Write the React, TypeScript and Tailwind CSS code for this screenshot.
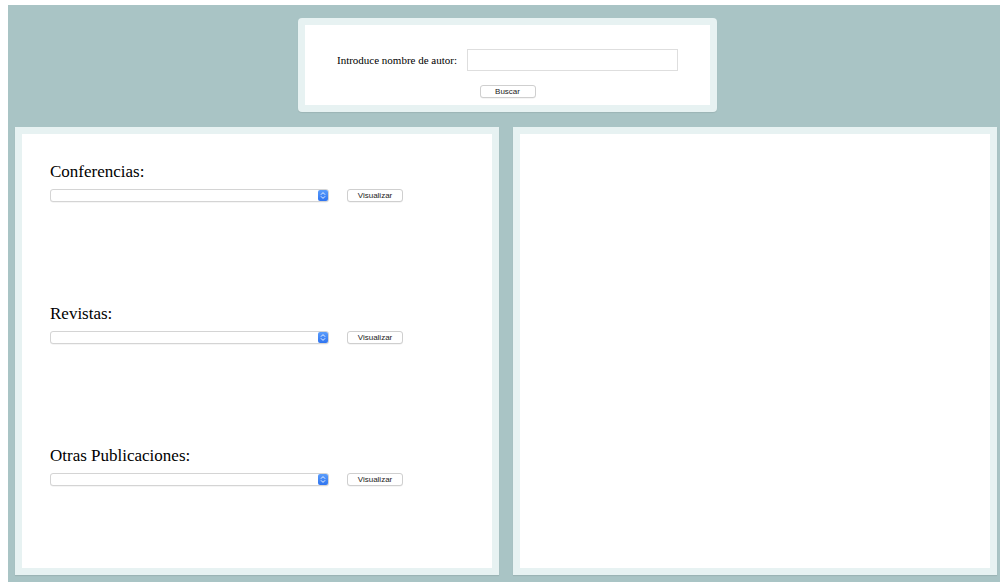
import React from "react";

const serif = { fontFamily: '"Liberation Serif", "Times New Roman", serif' };
const sans = { fontFamily: '"Liberation Sans", Arial, sans-serif' };

function SmallButton({ label, width }: { label: string; width: string }) {
  return (
    <button
      type="button"
      className={`${width} block h-[13px] rounded-[3px] border border-[#cfcfcf] bg-white text-[8px] leading-[11px] text-[#222] shadow-[0_0.5px_0.5px_rgba(0,0,0,0.08)]`}
      style={sans}
    >
      {label}
    </button>
  );
}

function SelectBox() {
  return (
    <div className="flex h-[13px] w-[279px] items-stretch rounded-[3px] border border-[#d4d4d4] bg-white shadow-[0_0.5px_0.5px_rgba(0,0,0,0.08)]">
      <div className="flex-1" />
      <div className="flex w-[10px] items-center justify-center rounded-[2px] bg-gradient-to-b from-[#5a9cfb] to-[#2f74f0]">
        <svg width="6" height="9" viewBox="0 0 6 9" fill="none">
          <path d="M1.2 3.4 3 1.6l1.8 1.8M1.2 5.6 3 7.4l1.8-1.8" stroke="white" strokeWidth="0.9" strokeLinecap="round" strokeLinejoin="round" />
        </svg>
      </div>
    </div>
  );
}

function Section({ title }: { title: string }) {
  return (
    <div className="h-[142px]">
      <h3 className="text-[17px] leading-[20px] text-black" style={serif}>
        {title}
      </h3>
      <div className="mt-[7px] flex items-center gap-[18px]">
        <SelectBox />
        <SmallButton label="Visualizar" width="w-[56px]" />
      </div>
    </div>
  );
}

export default function App() {
  const secciones = ["Conferencias:", "Revistas:", "Otras Publicaciones:"];

  return (
    <div className="h-[582px] w-[1000px] overflow-hidden bg-white pl-2 pt-[5px]">
      <div className="h-[577px] w-[996px] bg-[#a9c4c5] pt-[13px]">
        {/* buscador de autor */}
        <div className="ml-[290px] h-[94px] w-[419px] rounded-[4px] bg-[#e7f2f2] p-[7px] shadow-[0_1px_1px_rgba(0,0,0,0.08)]">
          <div className="flex h-full flex-col items-center bg-white pt-[24px]">
            <div className="flex items-center gap-[10px]">
              <label className="text-[11px] text-black" style={serif}>
                Introduce nombre de autor:
              </label>
              <input
                type="text"
                className="block h-[22px] w-[211px] border border-[#dedede] bg-white outline-none"
              />
            </div>
            <div className="mt-[14px] flex">
              <SmallButton label="Buscar" width="w-[56px]" />
            </div>
          </div>
        </div>

        <div className="mt-[15px] flex gap-[14px] pl-[7px]">
          <div className="h-[448px] w-[484px] bg-[#e7f2f2] p-[7px] shadow-[0_1px_1px_rgba(0,0,0,0.08)]">
            <div className="h-full bg-white pl-[28px] pt-[28px]">
              {secciones.map((s) => (
                <Section key={s} title={s} />
              ))}
            </div>
          </div>
          <div className="h-[448px] w-[484px] bg-[#e7f2f2] p-[7px] shadow-[0_1px_1px_rgba(0,0,0,0.08)]">
            <div className="h-full bg-white" />
          </div>
        </div>
      </div>
    </div>
  );
}
